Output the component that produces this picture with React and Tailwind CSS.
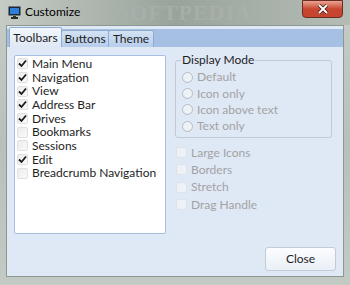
const font = { fontFamily: 'Lato, "Noto Sans", sans-serif' };

function Check({ checked, disabled }) {
  return (
    <span
      className={
        'w-[11px] h-[11px] rounded-[2px] border flex items-center justify-center shrink-0 ' +
        (disabled
          ? 'border-[#dde3ea] bg-[#eef2f7]'
          : 'border-[#e0e0e0] bg-gradient-to-br from-[#ececec] to-[#fafafa]')
      }
    >
      {checked && (
        <svg width="9" height="9" viewBox="0 0 9 9">
          <path d="M1 4.5 L3.5 7 L8 1.5" fill="none" stroke="#1b1b1b" strokeWidth="1.8" />
        </svg>
      )}
    </span>
  );
}

function Radio() {
  return (
    <span className="w-[11px] h-[11px] rounded-full border border-[#b5bcc6] bg-[#eef2f7] shrink-0" />
  );
}

const toolbars = [
  ['Main Menu', true],
  ['Navigation', true],
  ['View', true],
  ['Address Bar', true],
  ['Drives', true],
  ['Bookmarks', false],
  ['Sessions', false],
  ['Edit', true],
  ['Breadcrumb Navigation', false],
];

export default function App() {
  return (
    <div
      className="w-[350px] h-[285px] bg-gradient-to-b from-[#c6ccc6] via-[#b9c0ba] to-[#c3c9c4] flex flex-col overflow-hidden text-[12px] text-[#1e1e1e]"
      style={font}
    >
      {/* title bar */}
      <div className="h-[25px] flex items-start relative bg-gradient-to-r from-[#c5cbc5] via-[#99a39c] to-[#b5bcb6]">
        <svg className="ml-[8px] mt-[6px]" width="13" height="13" viewBox="0 0 13 13">
          <rect x="0.5" y="0.5" width="12" height="9" fill="#1d2733" />
          <rect x="2" y="2" width="9" height="6" fill="#2f7fd8" />
          <rect x="5" y="10" width="3" height="1" fill="#333" />
          <rect x="3" y="11" width="7" height="2" fill="#2a2a2a" />
        </svg>
        <span className="ml-[4px] mt-[5px] text-[12px] leading-[14px] text-black">Customize</span>
        <span
          className="absolute left-[117px] top-[1px] text-[22px] leading-[24px] font-bold tracking-[1px] text-[#aab3ac] opacity-70"
          style={{ fontFamily: '"Liberation Serif", serif' }}
        >
          SOFTPEDIA
        </span>
        <div className="absolute right-[7px] top-0 w-[41px] h-[18px] rounded-b-[4px] border border-[#6b2a22] bg-gradient-to-b from-[#e8a393] via-[#c8452f] to-[#c5452e] flex items-center justify-center">
          <svg width="12" height="10" viewBox="0 0 12 10">
            <path d="M2 1 L10 9 M10 1 L2 9" stroke="#3a1410" strokeWidth="3.4" />
            <path d="M2 1 L10 9 M10 1 L2 9" stroke="#ffffff" strokeWidth="2" />
          </svg>
        </div>
      </div>

      {/* client */}
      <div className="mx-[6px] h-[252px] border border-[#8e9790] bg-[#dfe8f5] flex flex-col">
        {/* tabs */}
        <div className="mt-[1px] h-[20px] flex items-end bg-gradient-to-b from-[#dfe8f5] from-[10%] to-[#a5c0e3] to-[10%]">
          <div className="ml-[2px] w-[53px] h-[20px] flex items-center justify-center border border-b-0 border-[#8eabd0] rounded-t-[2px] bg-gradient-to-b from-[#f3f7fc] to-[#dfe8f5]">
            Toolbars
          </div>
          <div className="w-[47px] h-[17px] flex items-center justify-center border border-b-0 border-l-0 border-[#8eabd0] rounded-t-[2px] bg-gradient-to-b from-[#d4e2f3] to-[#b6cdeb]">
            Buttons
          </div>
          <div className="w-[45px] h-[17px] flex items-center justify-center border border-b-0 border-l-0 border-[#8eabd0] rounded-t-[2px] bg-gradient-to-b from-[#d4e2f3] to-[#b6cdeb]">
            Theme
          </div>
        </div>

        {/* pane */}
        <div className="flex-1 flex flex-col bg-[#dfe8f5] px-[7px] pt-[8px] pb-[5px]">
          <div className="flex gap-[9px]">
            <div className="w-[152px] h-[179px] bg-white border border-[#a4bfe0] rounded-[2px] pt-[1px] pl-[2px] flex flex-col">
              {toolbars.map(([label, on]) => (
                <div key={label} className="h-[13.7px] flex items-center gap-[4px] whitespace-nowrap">
                  <Check checked={on} />
                  <span className="leading-none">{label}</span>
                </div>
              ))}
            </div>

            <div className="flex flex-col pt-[5px]">
              <div className="relative w-[157px] h-[78px] border border-[#c2cad4] rounded-[3px] pt-[8px] pl-[6px] flex flex-col text-[#a3a3a3]">
                <span className="absolute left-[5px] top-[-8px] px-[1px] bg-[#dfe8f5] text-[#1e1e1e] leading-[14px]">
                  Display Mode
                </span>
                {['Default', 'Icon only', 'Icon above text', 'Text only'].map((t) => (
                  <div key={t} className="h-[16.4px] flex items-center gap-[4px] whitespace-nowrap">
                    <Radio />
                    <span className="leading-none">{t}</span>
                  </div>
                ))}
              </div>
              <div className="mt-[6px] flex flex-col text-[#a3a3a3]">
                {['Large Icons', 'Borders', 'Stretch', 'Drag Handle'].map((t) => (
                  <div key={t} className="h-[17.3px] flex items-center gap-[4px] pl-[1px] whitespace-nowrap">
                    <Check disabled />
                    <span className="leading-none">{t}</span>
                  </div>
                ))}
              </div>
            </div>
          </div>

          <div className="mt-auto flex justify-end">
            <button className="w-[71px] h-[24px] rounded-[3px] border border-[#c3cbd6] bg-gradient-to-b from-[#fbfcfe] to-[#eaf0f7] text-[#1e1e1e]">
              Close
            </button>
          </div>
        </div>
      </div>
    </div>
  );
}
